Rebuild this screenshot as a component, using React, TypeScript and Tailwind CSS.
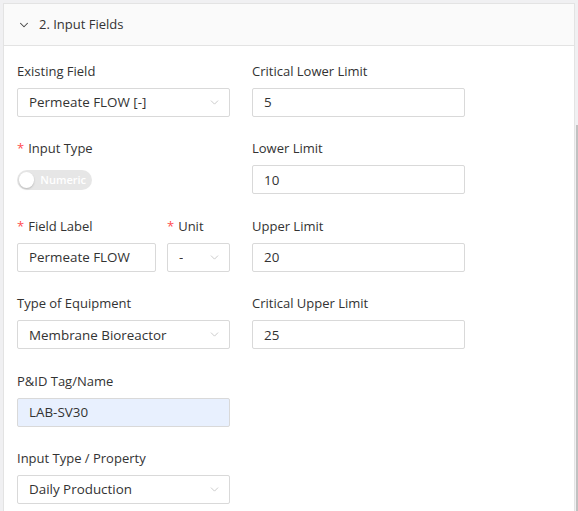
import { ChevronDown } from "lucide-react";

const font = { fontFamily: '"Open Sans", "Noto Sans", sans-serif' };

function Label({ text, required }: { text: string; required?: boolean }) {
  return (
    <div className="h-[22px] leading-[22px] text-[13px] text-[#333]">
      {required && <span className="text-[#ff4d4f] mr-[4px]">*</span>}
      {text}
    </div>
  );
}

function TextInput({ value, autofill, className = "" }: { value: string; autofill?: boolean; className?: string }) {
  return (
    <div
      className={`h-[29px] mt-[6px] border border-[#d9d9d9] rounded-[2px] px-[11px] flex items-center text-[13.4px] text-[#333] ${
        autofill ? "bg-[#e8f0fe]" : "bg-white"
      } ${className}`}
    >
      {value}
    </div>
  );
}

function Select({ value, className = "" }: { value: string; className?: string }) {
  return (
    <div
      className={`h-[29px] mt-[6px] border border-[#d9d9d9] rounded-[2px] pl-[11px] pr-[8px] flex items-center justify-between bg-white text-[13.4px] text-[#333] ${className}`}
    >
      <span className="truncate">{value}</span>
      <ChevronDown size={13} strokeWidth={1.5} className="text-[#bfbfbf] shrink-0" />
    </div>
  );
}

function Field({ label, required, children }: { label: string; required?: boolean; children: React.ReactNode }) {
  return (
    <div className="mb-[20.4px]">
      <Label text={label} required={required} />
      {children}
    </div>
  );
}

export default function App() {
  return (
    <div className="w-[578px] h-[511px] bg-[#f0f0f2] flex pt-[3px] pl-[3px] overflow-hidden" style={font}>
      <div className="w-[572px] h-[520px] bg-white border border-[#e3e3e3] shrink-0">
        <div className="h-[42px] bg-[#fafafa] border-b border-[#e3e3e3] flex items-center pl-[13px] text-[13px] text-[#333]">
          <ChevronDown size={14} strokeWidth={1.8} className="text-[#444] mr-[8px]" />
          2. Input Fields
        </div>
        <div className="pt-[14px] pl-[13px] grid grid-cols-[213px_213px] gap-x-[22px]">
          <Field label="Existing Field">
            <Select value="Permeate FLOW [-]" />
          </Field>
          <Field label="Critical Lower Limit">
            <TextInput value="5" />
          </Field>

          <Field label="Input Type" required>
            <div className="h-[29px] mt-[6px] flex items-center">
              <div className="h-[20px] w-[75px] rounded-full bg-[#e6e6e6] flex items-center pl-[2px] pr-[6px] gap-[6px]">
                <div className="w-[16px] h-[16px] rounded-full bg-white shadow-[0_1px_2px_rgba(0,0,0,0.2)]" />
                <span className="text-[11px] font-semibold text-white">Numeric</span>
              </div>
            </div>
          </Field>
          <Field label="Lower Limit">
            <TextInput value="10" />
          </Field>

          <div className="mb-[20.4px] flex gap-[11px]">
            <div className="w-[139px]">
              <Label text="Field Label" required />
              <TextInput value="Permeate FLOW" />
            </div>
            <div className="w-[63px]">
              <Label text="Unit" required />
              <Select value="-" />
            </div>
          </div>
          <Field label="Upper Limit">
            <TextInput value="20" />
          </Field>

          <Field label="Type of Equipment">
            <Select value="Membrane Bioreactor" />
          </Field>
          <Field label="Critical Upper Limit">
            <TextInput value="25" />
          </Field>

          <Field label="P&ID Tag/Name">
            <TextInput value="LAB-SV30" autofill />
          </Field>
          <div />

          <Field label="Input Type / Property">
            <Select value="Daily Production" />
          </Field>
          <div />
        </div>
      </div>
      <div className="flex-1 flex flex-col">
        <div className="h-[122px]" />
        <div className="flex-1 flex justify-end">
          <div className="w-[2px] bg-[#c1c1c1]" />
        </div>
      </div>
    </div>
  );
}
